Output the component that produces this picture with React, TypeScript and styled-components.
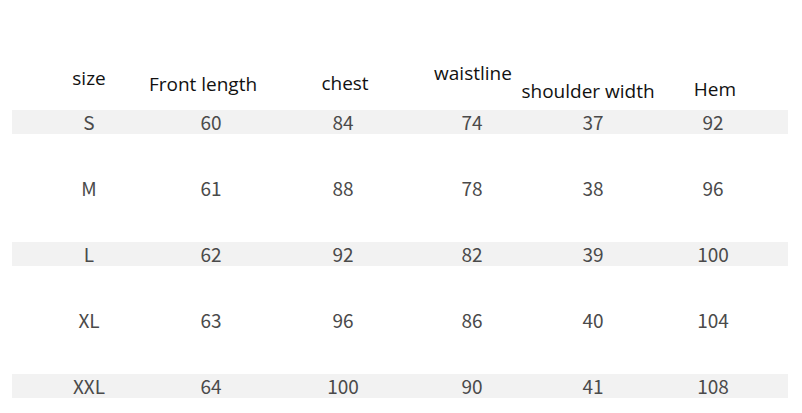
import React from "react";
import styled, { createGlobalStyle } from "styled-components";

type Header = { label: string; dx: number; top: number };

const HEADERS: Header[] = [
  { label: "size", dx: 0, top: 68 },
  { label: "Front length", dx: -8, top: 74 },
  { label: "chest", dx: 2, top: 73 },
  { label: "waistline", dx: 1, top: 63 },
  { label: "shoulder width", dx: -5, top: 81 },
  { label: "Hem", dx: 2, top: 79 },
];

const ROWS = [
  ["S", "60", "84", "74", "37", "92"],
  ["M", "61", "88", "78", "38", "96"],
  ["L", "62", "92", "82", "39", "100"],
  ["XL", "63", "96", "86", "40", "104"],
  ["XXL", "64", "100", "90", "41", "108"],
];

const GlobalStyle = createGlobalStyle`
  html, body {
    margin: 0;
    padding: 0;
    background: #ffffff;
  }
`;

const SizeChart: React.FC = () => {
  return (
    <Page>
      <HeaderRow>
        {HEADERS.map((h) => (
          <HeaderCell key={h.label} $top={h.top}>
            <HeaderLabel $dx={h.dx}>{h.label}</HeaderLabel>
          </HeaderCell>
        ))}
      </HeaderRow>
      {ROWS.map((row, i) => (
        <Row key={row[0]} $striped={i % 2 === 0}>
          {row.map((value, j) => (
            <Cell key={j}>{value}</Cell>
          ))}
        </Row>
      ))}
    </Page>
  );
};

export default function App() {
  return (
    <>
      <GlobalStyle />
      <SizeChart />
    </>
  );
}

const COLUMNS = "154px 90px 174px 84px 158px 82px 1fr";

const Page = styled.div`
  width: 802px;
  height: 413px;
  box-sizing: border-box;
  padding: 0 14px 0 12px;
  display: flex;
  flex-direction: column;
  background: #ffffff;
  overflow: hidden;
`;

const HeaderRow = styled.div`
  display: grid;
  grid-template-columns: ${COLUMNS};
  height: 110px;
`;

const HeaderCell = styled.div<{ $top: number }>`
  display: flex;
  justify-content: center;
  padding-top: ${({ $top }) => $top}px;
  white-space: nowrap;
`;

const HeaderLabel = styled.span<{ $dx: number }>`
  margin-left: ${({ $dx }) => ($dx < 0 ? $dx * 2 : 0)}px;
  margin-right: ${({ $dx }) => ($dx > 0 ? -$dx * 2 : 0)}px;
  font-family: "Open Sans", "Noto Sans", sans-serif;
  font-size: 19px;
  line-height: 20px;
  color: #111111;
`;

const Row = styled.div<{ $striped: boolean }>`
  display: grid;
  grid-template-columns: ${COLUMNS};
  align-items: center;
  height: ${({ $striped }) => ($striped ? 24 : 108)}px;
  background: ${({ $striped }) => ($striped ? "#f2f2f2" : "transparent")};
`;

const Cell = styled.div`
  text-align: center;
  font-family: "Noto Sans CJK SC", "Noto Sans", sans-serif;
  font-size: 19px;
  line-height: 24px;
  color: #4a4a4a;
`;
